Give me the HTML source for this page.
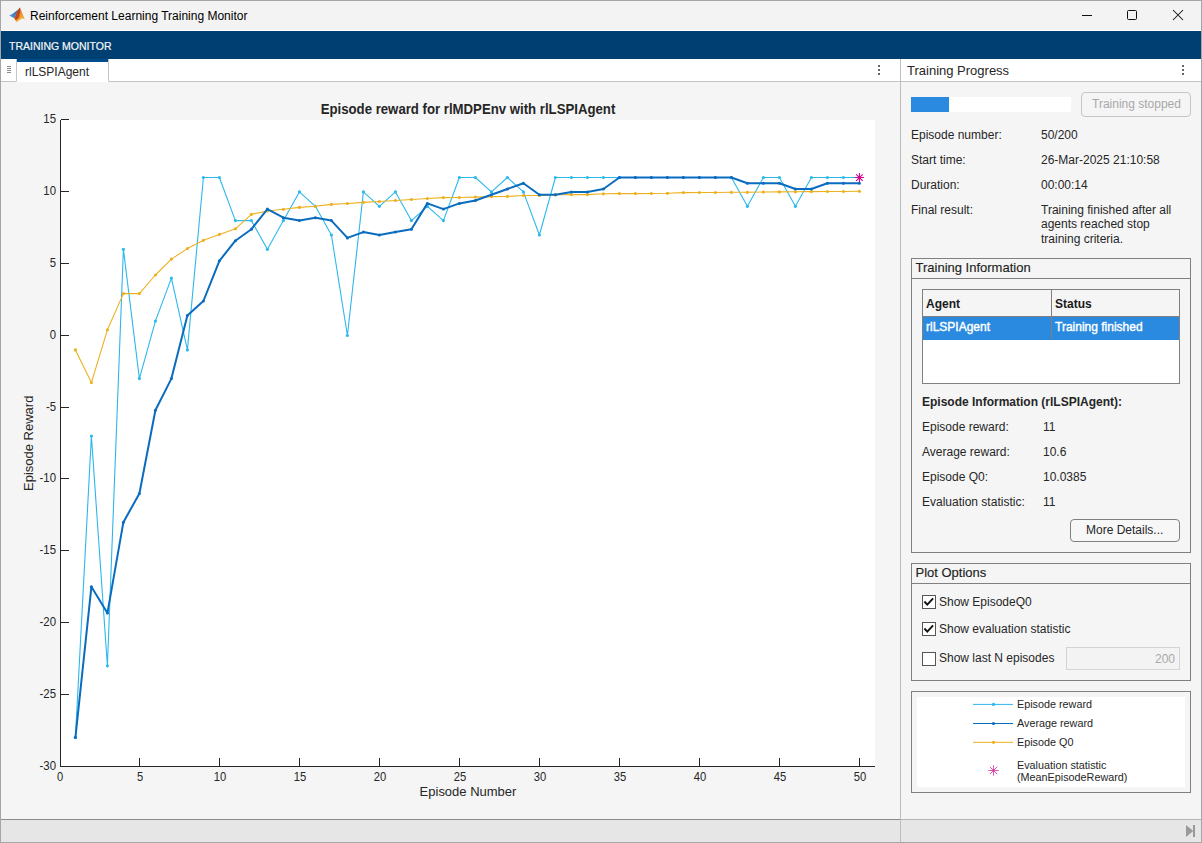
<!DOCTYPE html>
<html><head><meta charset="utf-8">
<style>
*{box-sizing:border-box;margin:0;padding:0}
html,body{width:1202px;height:843px;overflow:hidden}
body{position:relative;background:#f5f5f5;font-family:"Liberation Sans",sans-serif;color:#262626}
.a{position:absolute}
.t{position:absolute;white-space:nowrap;line-height:1}
</style></head><body>
<!-- window border -->
<div class="a" style="left:0;top:0;width:1202px;height:843px;border:1px solid #a6a6a6;z-index:50;pointer-events:none"></div>
<!-- title bar -->
<div class="a" style="left:0;top:0;width:1202px;height:31px;background:#f3f3f3;border-bottom:1px solid #ffffff"></div>
<svg class="a" style="left:0;top:0" width="30" height="30" viewBox="0 0 30 30">
 <defs><linearGradient id="mb" x1="0" y1="0" x2="1" y2="0"><stop offset="0" stop-color="#5aa8e8"/><stop offset="1" stop-color="#1f5fa8"/></linearGradient>
 <linearGradient id="mo" x1="0" y1="0" x2="0.3" y2="1"><stop offset="0" stop-color="#c43a1c"/><stop offset="0.45" stop-color="#e8862a"/><stop offset="1" stop-color="#f6b73a"/></linearGradient></defs>
 <path d="M9.2,15.4 L13,13.4 L18.6,9.2 L15.5,15.2 L14.3,18.2 Z" fill="url(#mb)"/>
 <path d="M19.7,7.6 C21,9.5 22.8,15 24.9,19.4 L22.2,18.3 L16.4,22.2 L14.3,18.2 L16.5,13 Z" fill="url(#mo)"/>
 <path d="M19.7,7.6 L16.5,13 L14.3,18.2 L16,20.5 L19,17.5 L20,12 Z" fill="#b0301a" opacity="0.75"/>
</svg>
<div class="t" style="left:30px;top:10px;font-size:12px;color:#000">Reinforcement Learning Training Monitor</div>
<!-- window controls -->
<div class="a" style="left:1082px;top:15px;width:10px;height:1px;background:#111"></div>
<div class="a" style="left:1127px;top:10px;width:10px;height:10px;border:1px solid #111;border-radius:1.5px"></div>
<svg class="a" style="left:1172px;top:9px" width="12" height="12" viewBox="0 0 12 12"><path d="M1,1L11,11M11,1L1,11" stroke="#111" stroke-width="1.05"/></svg>
<!-- toolstrip -->
<div class="a" style="left:0;top:31px;width:1202px;height:28px;background:#003f72"></div>
<div class="t" style="left:9px;top:41.4px;font-size:10.5px;color:#f6f6f6;-webkit-text-stroke:0.2px #f6f6f6">TRAINING MONITOR</div>

<!-- LEFT DOC -->
<div class="a" style="left:1px;top:59px;width:16px;height:23px;background:#fff;border-right:1px solid #c4c4c4;border-bottom:1px solid #c4c4c4;border-bottom-right-radius:2px"></div>
<div class="a" style="left:7px;top:66px;width:4px;height:1px;background:#8a8a8a;box-shadow:0 2px 0 #8a8a8a,0 4px 0 #8a8a8a,0 6px 0 #8a8a8a"></div>
<div class="a" style="left:17px;top:59px;width:91px;height:23px;background:#fff;border-top:3px solid #004c8c"></div>
<div class="t" style="left:25px;top:66px;font-size:12px;color:#262626">rlLSPIAgent</div>
<div class="a" style="left:108px;top:59px;width:793px;height:23px;background:#fff;border-left:1px solid #c4c4c4;border-bottom:1px solid #c4c4c4;border-bottom-left-radius:2px"></div>
<div class="a" style="left:878px;top:65px;width:2px;height:2px;background:#666;box-shadow:0 4px 0 #666,0 8px 0 #666"></div>

<!-- chart -->
<svg class="a" style="left:0;top:0" width="901" height="843" viewBox="0 0 901 843">
 <rect x="61" y="120" width="814" height="646" fill="#fff"/>
 <polyline points="75.4,737.6 91.4,436.0 107.4,665.8 123.4,249.3 139.4,378.6 155.4,321.1 171.4,278.1 187.4,349.9 203.4,177.5 219.4,177.5 235.4,220.6 251.4,220.6 267.4,249.3 283.4,220.6 299.4,191.9 315.4,206.3 331.4,235.0 347.4,335.5 363.4,191.9 379.4,206.3 395.4,191.9 411.4,220.6 427.4,206.3 443.4,220.6 459.4,177.5 475.4,177.5 491.4,191.9 507.4,177.5 523.4,191.9 539.4,235.0 555.4,177.5 571.4,177.5 587.4,177.5 603.4,177.5 619.4,177.5 635.4,177.5 651.4,177.5 667.4,177.5 683.4,177.5 699.4,177.5 715.4,177.5 731.4,177.5 747.4,206.3 763.4,177.5 779.4,177.5 795.4,206.3 811.4,177.5 827.4,177.5 843.4,177.5 859.4,177.5" fill="none" stroke="#2DB8EC" stroke-width="1.1" stroke-linejoin="round"/>
<circle cx="75.4" cy="737.6" r="1.6" fill="#2DB8EC"/><circle cx="91.4" cy="436.0" r="1.6" fill="#2DB8EC"/><circle cx="107.4" cy="665.8" r="1.6" fill="#2DB8EC"/><circle cx="123.4" cy="249.3" r="1.6" fill="#2DB8EC"/><circle cx="139.4" cy="378.6" r="1.6" fill="#2DB8EC"/><circle cx="155.4" cy="321.1" r="1.6" fill="#2DB8EC"/><circle cx="171.4" cy="278.1" r="1.6" fill="#2DB8EC"/><circle cx="187.4" cy="349.9" r="1.6" fill="#2DB8EC"/><circle cx="203.4" cy="177.5" r="1.6" fill="#2DB8EC"/><circle cx="219.4" cy="177.5" r="1.6" fill="#2DB8EC"/><circle cx="235.4" cy="220.6" r="1.6" fill="#2DB8EC"/><circle cx="251.4" cy="220.6" r="1.6" fill="#2DB8EC"/><circle cx="267.4" cy="249.3" r="1.6" fill="#2DB8EC"/><circle cx="283.4" cy="220.6" r="1.6" fill="#2DB8EC"/><circle cx="299.4" cy="191.9" r="1.6" fill="#2DB8EC"/><circle cx="315.4" cy="206.3" r="1.6" fill="#2DB8EC"/><circle cx="331.4" cy="235.0" r="1.6" fill="#2DB8EC"/><circle cx="347.4" cy="335.5" r="1.6" fill="#2DB8EC"/><circle cx="363.4" cy="191.9" r="1.6" fill="#2DB8EC"/><circle cx="379.4" cy="206.3" r="1.6" fill="#2DB8EC"/><circle cx="395.4" cy="191.9" r="1.6" fill="#2DB8EC"/><circle cx="411.4" cy="220.6" r="1.6" fill="#2DB8EC"/><circle cx="427.4" cy="206.3" r="1.6" fill="#2DB8EC"/><circle cx="443.4" cy="220.6" r="1.6" fill="#2DB8EC"/><circle cx="459.4" cy="177.5" r="1.6" fill="#2DB8EC"/><circle cx="475.4" cy="177.5" r="1.6" fill="#2DB8EC"/><circle cx="491.4" cy="191.9" r="1.6" fill="#2DB8EC"/><circle cx="507.4" cy="177.5" r="1.6" fill="#2DB8EC"/><circle cx="523.4" cy="191.9" r="1.6" fill="#2DB8EC"/><circle cx="539.4" cy="235.0" r="1.6" fill="#2DB8EC"/><circle cx="555.4" cy="177.5" r="1.6" fill="#2DB8EC"/><circle cx="571.4" cy="177.5" r="1.6" fill="#2DB8EC"/><circle cx="587.4" cy="177.5" r="1.6" fill="#2DB8EC"/><circle cx="603.4" cy="177.5" r="1.6" fill="#2DB8EC"/><circle cx="619.4" cy="177.5" r="1.6" fill="#2DB8EC"/><circle cx="635.4" cy="177.5" r="1.6" fill="#2DB8EC"/><circle cx="651.4" cy="177.5" r="1.6" fill="#2DB8EC"/><circle cx="667.4" cy="177.5" r="1.6" fill="#2DB8EC"/><circle cx="683.4" cy="177.5" r="1.6" fill="#2DB8EC"/><circle cx="699.4" cy="177.5" r="1.6" fill="#2DB8EC"/><circle cx="715.4" cy="177.5" r="1.6" fill="#2DB8EC"/><circle cx="731.4" cy="177.5" r="1.6" fill="#2DB8EC"/><circle cx="747.4" cy="206.3" r="1.6" fill="#2DB8EC"/><circle cx="763.4" cy="177.5" r="1.6" fill="#2DB8EC"/><circle cx="779.4" cy="177.5" r="1.6" fill="#2DB8EC"/><circle cx="795.4" cy="206.3" r="1.6" fill="#2DB8EC"/><circle cx="811.4" cy="177.5" r="1.6" fill="#2DB8EC"/><circle cx="827.4" cy="177.5" r="1.6" fill="#2DB8EC"/><circle cx="843.4" cy="177.5" r="1.6" fill="#2DB8EC"/><circle cx="859.4" cy="177.5" r="1.6" fill="#2DB8EC"/>
<polyline points="75.4,349.9 91.4,382.6 107.4,329.8 123.4,293.6 139.4,293.6 155.4,275.0 171.4,259.1 187.4,248.6 203.4,240.3 219.4,234.4 235.4,228.8 251.4,214.4 267.4,211.0 283.4,209.3 299.4,207.4 315.4,206.3 331.4,204.4 347.4,203.5 363.4,202.4 379.4,201.5 395.4,200.5 411.4,199.5 427.4,198.5 443.4,197.6 459.4,197.5 475.4,197.1 491.4,196.6 507.4,196.4 523.4,195.5 539.4,195.5 555.4,194.8 571.4,194.6 587.4,194.6 603.4,193.8 619.4,193.6 635.4,193.6 651.4,193.5 667.4,193.3 683.4,192.6 699.4,192.5 715.4,192.5 731.4,192.3 747.4,192.3 763.4,192.0 779.4,191.9 795.4,191.8 811.4,191.6 827.4,191.5 843.4,191.5 859.4,191.3" fill="none" stroke="#EDB120" stroke-width="1.1" stroke-linejoin="round"/>
<circle cx="75.4" cy="349.9" r="1.6" fill="#EDB120"/><circle cx="91.4" cy="382.6" r="1.6" fill="#EDB120"/><circle cx="107.4" cy="329.8" r="1.6" fill="#EDB120"/><circle cx="123.4" cy="293.6" r="1.6" fill="#EDB120"/><circle cx="139.4" cy="293.6" r="1.6" fill="#EDB120"/><circle cx="155.4" cy="275.0" r="1.6" fill="#EDB120"/><circle cx="171.4" cy="259.1" r="1.6" fill="#EDB120"/><circle cx="187.4" cy="248.6" r="1.6" fill="#EDB120"/><circle cx="203.4" cy="240.3" r="1.6" fill="#EDB120"/><circle cx="219.4" cy="234.4" r="1.6" fill="#EDB120"/><circle cx="235.4" cy="228.8" r="1.6" fill="#EDB120"/><circle cx="251.4" cy="214.4" r="1.6" fill="#EDB120"/><circle cx="267.4" cy="211.0" r="1.6" fill="#EDB120"/><circle cx="283.4" cy="209.3" r="1.6" fill="#EDB120"/><circle cx="299.4" cy="207.4" r="1.6" fill="#EDB120"/><circle cx="315.4" cy="206.3" r="1.6" fill="#EDB120"/><circle cx="331.4" cy="204.4" r="1.6" fill="#EDB120"/><circle cx="347.4" cy="203.5" r="1.6" fill="#EDB120"/><circle cx="363.4" cy="202.4" r="1.6" fill="#EDB120"/><circle cx="379.4" cy="201.5" r="1.6" fill="#EDB120"/><circle cx="395.4" cy="200.5" r="1.6" fill="#EDB120"/><circle cx="411.4" cy="199.5" r="1.6" fill="#EDB120"/><circle cx="427.4" cy="198.5" r="1.6" fill="#EDB120"/><circle cx="443.4" cy="197.6" r="1.6" fill="#EDB120"/><circle cx="459.4" cy="197.5" r="1.6" fill="#EDB120"/><circle cx="475.4" cy="197.1" r="1.6" fill="#EDB120"/><circle cx="491.4" cy="196.6" r="1.6" fill="#EDB120"/><circle cx="507.4" cy="196.4" r="1.6" fill="#EDB120"/><circle cx="523.4" cy="195.5" r="1.6" fill="#EDB120"/><circle cx="539.4" cy="195.5" r="1.6" fill="#EDB120"/><circle cx="555.4" cy="194.8" r="1.6" fill="#EDB120"/><circle cx="571.4" cy="194.6" r="1.6" fill="#EDB120"/><circle cx="587.4" cy="194.6" r="1.6" fill="#EDB120"/><circle cx="603.4" cy="193.8" r="1.6" fill="#EDB120"/><circle cx="619.4" cy="193.6" r="1.6" fill="#EDB120"/><circle cx="635.4" cy="193.6" r="1.6" fill="#EDB120"/><circle cx="651.4" cy="193.5" r="1.6" fill="#EDB120"/><circle cx="667.4" cy="193.3" r="1.6" fill="#EDB120"/><circle cx="683.4" cy="192.6" r="1.6" fill="#EDB120"/><circle cx="699.4" cy="192.5" r="1.6" fill="#EDB120"/><circle cx="715.4" cy="192.5" r="1.6" fill="#EDB120"/><circle cx="731.4" cy="192.3" r="1.6" fill="#EDB120"/><circle cx="747.4" cy="192.3" r="1.6" fill="#EDB120"/><circle cx="763.4" cy="192.0" r="1.6" fill="#EDB120"/><circle cx="779.4" cy="191.9" r="1.6" fill="#EDB120"/><circle cx="795.4" cy="191.8" r="1.6" fill="#EDB120"/><circle cx="811.4" cy="191.6" r="1.6" fill="#EDB120"/><circle cx="827.4" cy="191.5" r="1.6" fill="#EDB120"/><circle cx="843.4" cy="191.5" r="1.6" fill="#EDB120"/><circle cx="859.4" cy="191.3" r="1.6" fill="#EDB120"/>
<polyline points="75.4,737.6 91.4,586.8 107.4,613.1 123.4,522.2 139.4,493.5 155.4,410.2 171.4,378.6 187.4,315.4 203.4,301.0 219.4,260.8 235.4,240.7 251.4,229.2 267.4,209.1 283.4,217.7 299.4,220.6 315.4,217.7 331.4,220.6 347.4,237.9 363.4,232.1 379.4,235.0 395.4,232.1 411.4,229.2 427.4,203.4 443.4,209.1 459.4,203.4 475.4,200.5 491.4,194.8 507.4,189.0 523.4,183.3 539.4,194.8 555.4,194.8 571.4,191.9 587.4,191.9 603.4,189.0 619.4,177.5 635.4,177.5 651.4,177.5 667.4,177.5 683.4,177.5 699.4,177.5 715.4,177.5 731.4,177.5 747.4,183.3 763.4,183.3 779.4,183.3 795.4,189.0 811.4,189.0 827.4,183.3 843.4,183.3 859.4,183.3" fill="none" stroke="#0A6CBF" stroke-width="2.0" stroke-linejoin="round"/>
<circle cx="75.4" cy="737.6" r="1.5" fill="#0A6CBF"/><circle cx="91.4" cy="586.8" r="1.5" fill="#0A6CBF"/><circle cx="107.4" cy="613.1" r="1.5" fill="#0A6CBF"/><circle cx="123.4" cy="522.2" r="1.5" fill="#0A6CBF"/><circle cx="139.4" cy="493.5" r="1.5" fill="#0A6CBF"/><circle cx="155.4" cy="410.2" r="1.5" fill="#0A6CBF"/><circle cx="171.4" cy="378.6" r="1.5" fill="#0A6CBF"/><circle cx="187.4" cy="315.4" r="1.5" fill="#0A6CBF"/><circle cx="203.4" cy="301.0" r="1.5" fill="#0A6CBF"/><circle cx="219.4" cy="260.8" r="1.5" fill="#0A6CBF"/><circle cx="235.4" cy="240.7" r="1.5" fill="#0A6CBF"/><circle cx="251.4" cy="229.2" r="1.5" fill="#0A6CBF"/><circle cx="267.4" cy="209.1" r="1.5" fill="#0A6CBF"/><circle cx="283.4" cy="217.7" r="1.5" fill="#0A6CBF"/><circle cx="299.4" cy="220.6" r="1.5" fill="#0A6CBF"/><circle cx="315.4" cy="217.7" r="1.5" fill="#0A6CBF"/><circle cx="331.4" cy="220.6" r="1.5" fill="#0A6CBF"/><circle cx="347.4" cy="237.9" r="1.5" fill="#0A6CBF"/><circle cx="363.4" cy="232.1" r="1.5" fill="#0A6CBF"/><circle cx="379.4" cy="235.0" r="1.5" fill="#0A6CBF"/><circle cx="395.4" cy="232.1" r="1.5" fill="#0A6CBF"/><circle cx="411.4" cy="229.2" r="1.5" fill="#0A6CBF"/><circle cx="427.4" cy="203.4" r="1.5" fill="#0A6CBF"/><circle cx="443.4" cy="209.1" r="1.5" fill="#0A6CBF"/><circle cx="459.4" cy="203.4" r="1.5" fill="#0A6CBF"/><circle cx="475.4" cy="200.5" r="1.5" fill="#0A6CBF"/><circle cx="491.4" cy="194.8" r="1.5" fill="#0A6CBF"/><circle cx="507.4" cy="189.0" r="1.5" fill="#0A6CBF"/><circle cx="523.4" cy="183.3" r="1.5" fill="#0A6CBF"/><circle cx="539.4" cy="194.8" r="1.5" fill="#0A6CBF"/><circle cx="555.4" cy="194.8" r="1.5" fill="#0A6CBF"/><circle cx="571.4" cy="191.9" r="1.5" fill="#0A6CBF"/><circle cx="587.4" cy="191.9" r="1.5" fill="#0A6CBF"/><circle cx="603.4" cy="189.0" r="1.5" fill="#0A6CBF"/><circle cx="619.4" cy="177.5" r="1.5" fill="#0A6CBF"/><circle cx="635.4" cy="177.5" r="1.5" fill="#0A6CBF"/><circle cx="651.4" cy="177.5" r="1.5" fill="#0A6CBF"/><circle cx="667.4" cy="177.5" r="1.5" fill="#0A6CBF"/><circle cx="683.4" cy="177.5" r="1.5" fill="#0A6CBF"/><circle cx="699.4" cy="177.5" r="1.5" fill="#0A6CBF"/><circle cx="715.4" cy="177.5" r="1.5" fill="#0A6CBF"/><circle cx="731.4" cy="177.5" r="1.5" fill="#0A6CBF"/><circle cx="747.4" cy="183.3" r="1.5" fill="#0A6CBF"/><circle cx="763.4" cy="183.3" r="1.5" fill="#0A6CBF"/><circle cx="779.4" cy="183.3" r="1.5" fill="#0A6CBF"/><circle cx="795.4" cy="189.0" r="1.5" fill="#0A6CBF"/><circle cx="811.4" cy="189.0" r="1.5" fill="#0A6CBF"/><circle cx="827.4" cy="183.3" r="1.5" fill="#0A6CBF"/><circle cx="843.4" cy="183.3" r="1.5" fill="#0A6CBF"/><circle cx="859.4" cy="183.3" r="1.5" fill="#0A6CBF"/>
<path d="M854.84,177.54L864.04,177.54M856.19,174.29L862.69,180.79M859.44,172.94L859.44,182.14M862.69,174.29L856.19,180.79" stroke="#D0008C" stroke-width="1.1" fill="none"/>
 <g stroke="#262626" stroke-width="1" fill="none" shape-rendering="crispEdges">
  <path d="M60.5,119.5V766.5H875"/>
  <path d="M61,766.5H69"/>
<path d="M61,694.5H69"/>
<path d="M61,622.5H69"/>
<path d="M61,550.5H69"/>
<path d="M61,478.5H69"/>
<path d="M61,407.5H69"/>
<path d="M61,335.5H69"/>
<path d="M61,263.5H69"/>
<path d="M61,191.5H69"/>
<path d="M61,119.5H69"/>
<path d="M60.5,766V758"/>
<path d="M139.5,766V758"/>
<path d="M219.5,766V758"/>
<path d="M299.5,766V758"/>
<path d="M379.5,766V758"/>
<path d="M459.5,766V758"/>
<path d="M539.5,766V758"/>
<path d="M619.5,766V758"/>
<path d="M699.5,766V758"/>
<path d="M779.5,766V758"/>
<path d="M859.5,766V758"/>
 </g>
 <g font-family="Liberation Sans" font-size="12.4" fill="#262626">
  <text x="56" y="770.1" text-anchor="end" textLength="16.5" lengthAdjust="spacingAndGlyphs">-30</text>
<text x="56" y="698.1" text-anchor="end" textLength="16.5" lengthAdjust="spacingAndGlyphs">-25</text>
<text x="56" y="626.1" text-anchor="end" textLength="16.5" lengthAdjust="spacingAndGlyphs">-20</text>
<text x="56" y="554.1" text-anchor="end" textLength="16.5" lengthAdjust="spacingAndGlyphs">-15</text>
<text x="56" y="482.1" text-anchor="end" textLength="16.5" lengthAdjust="spacingAndGlyphs">-10</text>
<text x="56" y="411.1" text-anchor="end" textLength="10.1" lengthAdjust="spacingAndGlyphs">-5</text>
<text x="56" y="339.1" text-anchor="end" textLength="6.3" lengthAdjust="spacingAndGlyphs">0</text>
<text x="56" y="267.1" text-anchor="end" textLength="6.3" lengthAdjust="spacingAndGlyphs">5</text>
<text x="56" y="195.1" text-anchor="end" textLength="12.7" lengthAdjust="spacingAndGlyphs">10</text>
<text x="56" y="123.1" text-anchor="end" textLength="12.7" lengthAdjust="spacingAndGlyphs">15</text>
<text x="60.0" y="780.6" text-anchor="middle" textLength="6.2" lengthAdjust="spacingAndGlyphs">0</text>
<text x="140.0" y="780.6" text-anchor="middle" textLength="6.2" lengthAdjust="spacingAndGlyphs">5</text>
<text x="220.0" y="780.6" text-anchor="middle" textLength="12.5" lengthAdjust="spacingAndGlyphs">10</text>
<text x="300.0" y="780.6" text-anchor="middle" textLength="12.5" lengthAdjust="spacingAndGlyphs">15</text>
<text x="380.0" y="780.6" text-anchor="middle" textLength="12.5" lengthAdjust="spacingAndGlyphs">20</text>
<text x="460.0" y="780.6" text-anchor="middle" textLength="12.5" lengthAdjust="spacingAndGlyphs">25</text>
<text x="540.0" y="780.6" text-anchor="middle" textLength="12.5" lengthAdjust="spacingAndGlyphs">30</text>
<text x="620.0" y="780.6" text-anchor="middle" textLength="12.5" lengthAdjust="spacingAndGlyphs">35</text>
<text x="700.0" y="780.6" text-anchor="middle" textLength="12.5" lengthAdjust="spacingAndGlyphs">40</text>
<text x="780.0" y="780.6" text-anchor="middle" textLength="12.5" lengthAdjust="spacingAndGlyphs">45</text>
<text x="860.0" y="780.6" text-anchor="middle" textLength="12.5" lengthAdjust="spacingAndGlyphs">50</text>
 </g>
 <text x="468" y="114.3" text-anchor="middle" font-family="Liberation Sans" font-size="14" font-weight="bold" fill="#262626" textLength="294.6" lengthAdjust="spacingAndGlyphs">Episode reward for rlMDPEnv with rlLSPIAgent</text>
 <text x="468" y="795.6" text-anchor="middle" font-family="Liberation Sans" font-size="13.5" fill="#262626" textLength="96.8" lengthAdjust="spacingAndGlyphs">Episode Number</text>
 <text transform="translate(32.6,443.3) rotate(-90)" text-anchor="middle" font-family="Liberation Sans" font-size="13.5" fill="#262626" textLength="95.3" lengthAdjust="spacingAndGlyphs">Episode Reward</text>
</svg>

<!-- divider -->
<div class="a" style="left:900px;top:59px;width:1px;height:784px;background:#bdbdbd"></div>

<!-- RIGHT PANEL -->
<div class="a" style="left:901px;top:59px;width:301px;height:23px;background:#fff;border-bottom:1px solid #c4c4c4"></div>
<div class="t" style="left:907px;top:64px;font-size:13px;color:#262626">Training Progress</div>
<div class="a" style="left:1182px;top:65px;width:2px;height:2px;background:#666;box-shadow:0 4px 0 #666,0 8px 0 #666"></div>

<div class="a" style="left:911px;top:97px;width:160px;height:15px;background:#fff"></div>
<div class="a" style="left:911px;top:97px;width:38px;height:15px;background:#2a8adf"></div>
<div class="a" style="left:1081px;top:92px;width:110px;height:25px;border:1px solid #c6c6c6;border-radius:4px"></div>
<div class="t" style="left:1092px;top:98px;font-size:12px;color:#a8a8a8">Training stopped</div>

<div class="t" style="left:911px;top:129px;font-size:12px">Episode number:</div>
<div class="t" style="left:1041px;top:129px;font-size:12px">50/200</div>
<div class="t" style="left:911px;top:154px;font-size:12px">Start time:</div>
<div class="t" style="left:1041px;top:154px;font-size:12px">26-Mar-2025 21:10:58</div>
<div class="t" style="left:911px;top:179px;font-size:12px">Duration:</div>
<div class="t" style="left:1041px;top:179px;font-size:12px">00:00:14</div>
<div class="t" style="left:911px;top:204px;font-size:12px">Final result:</div>
<div class="t" style="left:1041px;top:202.5px;font-size:12px;line-height:14.5px;white-space:normal;width:150px">Training finished after all agents reached stop training criteria.</div>

<!-- Training Information panel -->
<div class="a" style="left:911px;top:258px;width:280px;height:295px;border:1px solid #808080"></div>
<div class="a" style="left:912px;top:278px;width:278px;height:1px;background:#808080"></div>
<div class="t" style="left:915.5px;top:261.3px;font-size:13px;color:#1f1f1f;-webkit-text-stroke:0.15px #1f1f1f">Training Information</div>
<div class="a" style="left:922px;top:289px;width:258px;height:95px;border:1px solid #808080;background:#fff"></div>
<div class="a" style="left:923px;top:290px;width:256px;height:27px;background:#f5f5f5;border-bottom:1px solid #808080"></div>
<div class="a" style="left:923px;top:317px;width:256px;height:23px;background:#2a8adf"></div>
<div class="a" style="left:1051px;top:290px;width:1px;height:49px;background:#808080"></div>
<div class="t" style="left:926px;top:298px;font-size:12px;font-weight:bold;color:#1a1a1a">Agent</div>
<div class="t" style="left:1055px;top:298px;font-size:12px;font-weight:bold;color:#1a1a1a">Status</div>
<div class="t" style="left:926px;top:321px;font-size:12px;color:#fff;-webkit-text-stroke:0.4px #fff">rlLSPIAgent</div>
<div class="t" style="left:1055px;top:321px;font-size:12px;color:#fff;-webkit-text-stroke:0.4px #fff">Training finished</div>

<div class="t" style="left:922px;top:396px;font-size:12px;font-weight:bold">Episode Information (rlLSPIAgent):</div>
<div class="t" style="left:922px;top:421px;font-size:12px">Episode reward:</div>
<div class="t" style="left:1043px;top:421px;font-size:12px">11</div>
<div class="t" style="left:922px;top:446px;font-size:12px">Average reward:</div>
<div class="t" style="left:1043px;top:446px;font-size:12px">10.6</div>
<div class="t" style="left:922px;top:471px;font-size:12px">Episode Q0:</div>
<div class="t" style="left:1043px;top:471px;font-size:12px">10.0385</div>
<div class="t" style="left:922px;top:496px;font-size:12px">Evaluation statistic:</div>
<div class="t" style="left:1043px;top:496px;font-size:12px">11</div>
<div class="a" style="left:1070px;top:519px;width:110px;height:23px;border:1px solid #808080;border-radius:4px;background:#f7f7f7"></div>
<div class="t" style="left:1086px;top:524px;font-size:12px">More Details...</div>

<!-- Plot options -->
<div class="a" style="left:911px;top:563px;width:280px;height:118px;border:1px solid #808080"></div>
<div class="a" style="left:912px;top:583px;width:278px;height:1px;background:#808080"></div>
<div class="t" style="left:915.5px;top:566.3px;font-size:13px;color:#1f1f1f;-webkit-text-stroke:0.15px #1f1f1f">Plot Options</div>
<div class="a" style="left:922px;top:595px;width:14px;height:14px;border:1px solid #555;background:#fff"></div><svg class="a" style="left:922px;top:595px" width="14" height="14" viewBox="0 0 14 14"><path d="M2.4,6.5L5.3,9.6L11.1,3.3" fill="none" stroke="#111" stroke-width="1.9"/></svg><div class="t" style="left:939px;top:596px;font-size:12px">Show EpisodeQ0</div>
<div class="a" style="left:922px;top:622px;width:14px;height:14px;border:1px solid #555;background:#fff"></div><svg class="a" style="left:922px;top:622px" width="14" height="14" viewBox="0 0 14 14"><path d="M2.4,6.5L5.3,9.6L11.1,3.3" fill="none" stroke="#111" stroke-width="1.9"/></svg><div class="t" style="left:939px;top:623px;font-size:12px">Show evaluation statistic</div>
<div class="a" style="left:922px;top:652px;width:14px;height:14px;border:1px solid #555;background:#fff"></div><div class="t" style="left:939px;top:652px;font-size:12px">Show last N episodes</div>

<div class="a" style="left:1066px;top:647px;width:114px;height:23px;border:1px solid #d4d4d4;background:#f3f3f3"></div>
<div class="t" style="left:1155px;top:653px;font-size:12px;color:#a8a8a8">200</div>

<!-- legend -->
<div class="a" style="left:911px;top:691px;width:280px;height:102px;border:1px solid #808080"></div>
<div class="a" style="left:917px;top:697px;width:268px;height:90px;background:#fff"></div>
<svg class="a" style="left:901px;top:682px" width="300" height="120" viewBox="901 682 300 120">
 <path d="M973,22.4H1013" transform="translate(0,682)" stroke="#2DB8EC" stroke-width="1"/>
 <circle cx="993.5" cy="704.4" r="1.6" fill="#2DB8EC"/>
 <path d="M973,723.5H1013" stroke="#0A6CBF" stroke-width="1.1"/>
 <circle cx="993.5" cy="723.5" r="1.6" fill="#0A6CBF"/>
 <path d="M973,742.3H1013" stroke="#EDB120" stroke-width="1"/>
 <circle cx="993.5" cy="742.3" r="1.6" fill="#EDB120"/>
 <path d="M988.30,770.50L998.70,770.50M989.82,766.82L997.18,774.18M993.50,765.30L993.50,775.70M997.18,766.82L989.82,774.18" stroke="#D42A9C" stroke-width="0.8" fill="none"/>
</svg>
<div class="t" style="left:1017px;top:699px;font-size:10.8px">Episode reward</div>
<div class="t" style="left:1017px;top:718px;font-size:10.8px">Average reward</div>
<div class="t" style="left:1017px;top:737px;font-size:10.8px">Episode Q0</div>
<div class="t" style="left:1017px;top:760px;font-size:10.8px">Evaluation statistic</div>
<div class="t" style="left:1017px;top:772px;font-size:10.8px">(MeanEpisodeReward)</div>

<!-- status bar -->
<div class="a" style="left:0;top:819px;width:900px;height:1px;background:#8a8a8a"></div>
<div class="a" style="left:901px;top:819px;width:301px;height:1px;background:#b4b4b4"></div>
<div class="a" style="left:0;top:820px;width:1202px;height:23px;background:#e6e6e6"></div>
<div class="a" style="left:900px;top:819px;width:1px;height:24px;background:#bdbdbd"></div>
<svg class="a" style="left:1185px;top:823px" width="13" height="15" viewBox="0 0 13 15"><path d="M1,2L8.2,8L1,14Z" fill="#999"/><rect x="8" y="2" width="2" height="12" fill="#999"/></svg>
</body></html>
